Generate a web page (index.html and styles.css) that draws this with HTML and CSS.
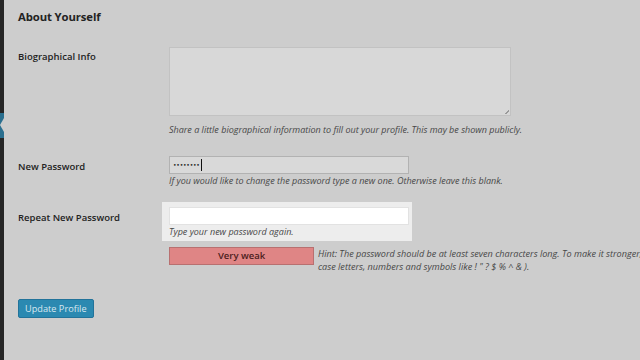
FILE: index.html
```html
<!DOCTYPE html>
<html>
<head>
<meta charset="utf-8">
<link rel="stylesheet" href="styles.css">
</head>
<body>
<div class="page">
  <div class="sidebar">
    <div class="current"><span class="notch"></span></div>
  </div>
  <main class="content">
    <h2 class="section-title">About Yourself</h2>

    <div class="row row-bio">
      <div class="label">Biographical Info</div>
      <div class="field">
        <div class="textarea"><span class="grip"></span></div>
        <p class="desc">Share a little biographical information to fill out your profile. This may be shown publicly.</p>
      </div>
    </div>

    <div class="row row-pass">
      <div class="label">New Password</div>
      <div class="field">
        <div class="input input-dim"><span class="dots">••••••••</span><span class="caret"></span></div>
        <p class="desc">If you would like to change the password type a new one. Otherwise leave this blank.</p>
      </div>
    </div>

    <div class="row row-repeat">
      <div class="label">Repeat New Password</div>
      <div class="field">
        <div class="spotlight">
          <div class="input input-white"></div>
          <p class="desc">Type your new password again.</p>
        </div>
        <div class="strength">
          <div class="meter">Very weak</div>
          <p class="hint">Hint: The password should be at least seven characters long. To make it stronger, use upper and lower<br>case letters, numbers and symbols like ! " ? $ % ^ &amp; ).</p>
        </div>
      </div>
    </div>

    <div class="actions">
      <span class="button">Update Profile</span>
    </div>
  </main>
</div>
</body>
</html>
```

FILE: styles.css
```css
html, body {
  margin: 0;
  padding: 0;
  width: 640px;
  height: 360px;
  overflow: hidden;
  background: #cdcdcd;
  font-family: "Open Sans", "Noto Sans", sans-serif;
  color: #252525;
}

.page {
  display: flex;
  height: 360px;
}

.sidebar {
  width: 4px;
  flex: none;
  background: #262626;
  padding-top: 113px;
}

.current {
  height: 25px;
  background: #2a6f8f;
  position: relative;
}

.notch {
  position: absolute;
  right: 0;
  top: 5px;
  width: 0;
  height: 0;
  border-top: 7px solid transparent;
  border-bottom: 7px solid transparent;
  border-right: 4px solid #cdcdcd;
}

.content {
  flex: 1;
  padding: 9px 0 0 14px;
  min-width: 0;
}

.section-title {
  margin: 0;
  font-size: 11.3px;
  line-height: 16px;
  font-weight: 700;
  letter-spacing: -0.1px;
  color: #232323;
}

.row {
  display: flex;
}

.label {
  width: 151px;
  flex: none;
  font-size: 9.5px;
  font-weight: 600;
  line-height: 14px;
  padding-top: 4px;
  color: #222222;
}

.row-bio .label { padding-top: 3px; }

.field {
  flex: none;
  width: 471px;
}

.row-bio { margin-top: 22px; }
.row-pass { margin-top: 20px; }
.row-repeat { margin-top: 20px; }

.textarea {
  width: 340px;
  height: 67px;
  background: #d8d8d8;
  border: 1px solid #c2c2c2;
  position: relative;
}

.grip {
  position: absolute;
  right: 1px;
  bottom: 1px;
  width: 4px;
  height: 4px;
  background: linear-gradient(135deg, transparent 50%, #9a9a9a 50%, #9a9a9a 65%, transparent 65%);
}

.desc {
  margin: 0;
  font-size: 9px;
  font-style: italic;
  line-height: 13px;
  color: #474747;
}

.row-bio .desc { margin-top: 7px; }

.input {
  width: 235px;
  height: 16px;
  display: flex;
  align-items: center;
  padding-left: 3px;
}

.input-dim {
  background: #d9d9d9;
  border: 1px solid #b2b2b2;
}

.dots {
  font-family: "DejaVu Sans", sans-serif;
  font-size: 6px;
  letter-spacing: -0.2px;
  color: #222;
  line-height: 16px;
}

.caret {
  width: 1px;
  height: 12px;
  background: #111;
  margin-left: 1px;
}

.spotlight {
  margin-left: -7px;
  margin-top: -5px;
  width: 240px;
  padding: 5px 3px 3px 7px;
  background: #ededed;
}

.input-white {
  background: #ffffff;
  border: 1px solid #e2e2e2;
}

.strength {
  display: flex;
  align-items: flex-start;
  margin-top: 6px;
}

.meter {
  width: 143px;
  height: 16px;
  flex: none;
  background: #df8585;
  border: 1px solid #b87070;
  font-size: 9.5px;
  font-weight: 600;
  line-height: 16px;
  text-align: center;
  color: #4a1c1c;
}

.hint {
  margin: 0 0 0 4px;
  white-space: nowrap;
  font-size: 9.1px;
  font-style: italic;
  line-height: 13px;
  color: #474747;
}

.actions {
  margin-top: 22px;
}

.button {
  display: inline-block;
  background: #2b89b1;
  border: 1px solid #22739a;
  border-radius: 2px;
  color: #d9e8f0;
  font-size: 9.2px;
  line-height: 17px;
  padding: 0 6px;
}
```
